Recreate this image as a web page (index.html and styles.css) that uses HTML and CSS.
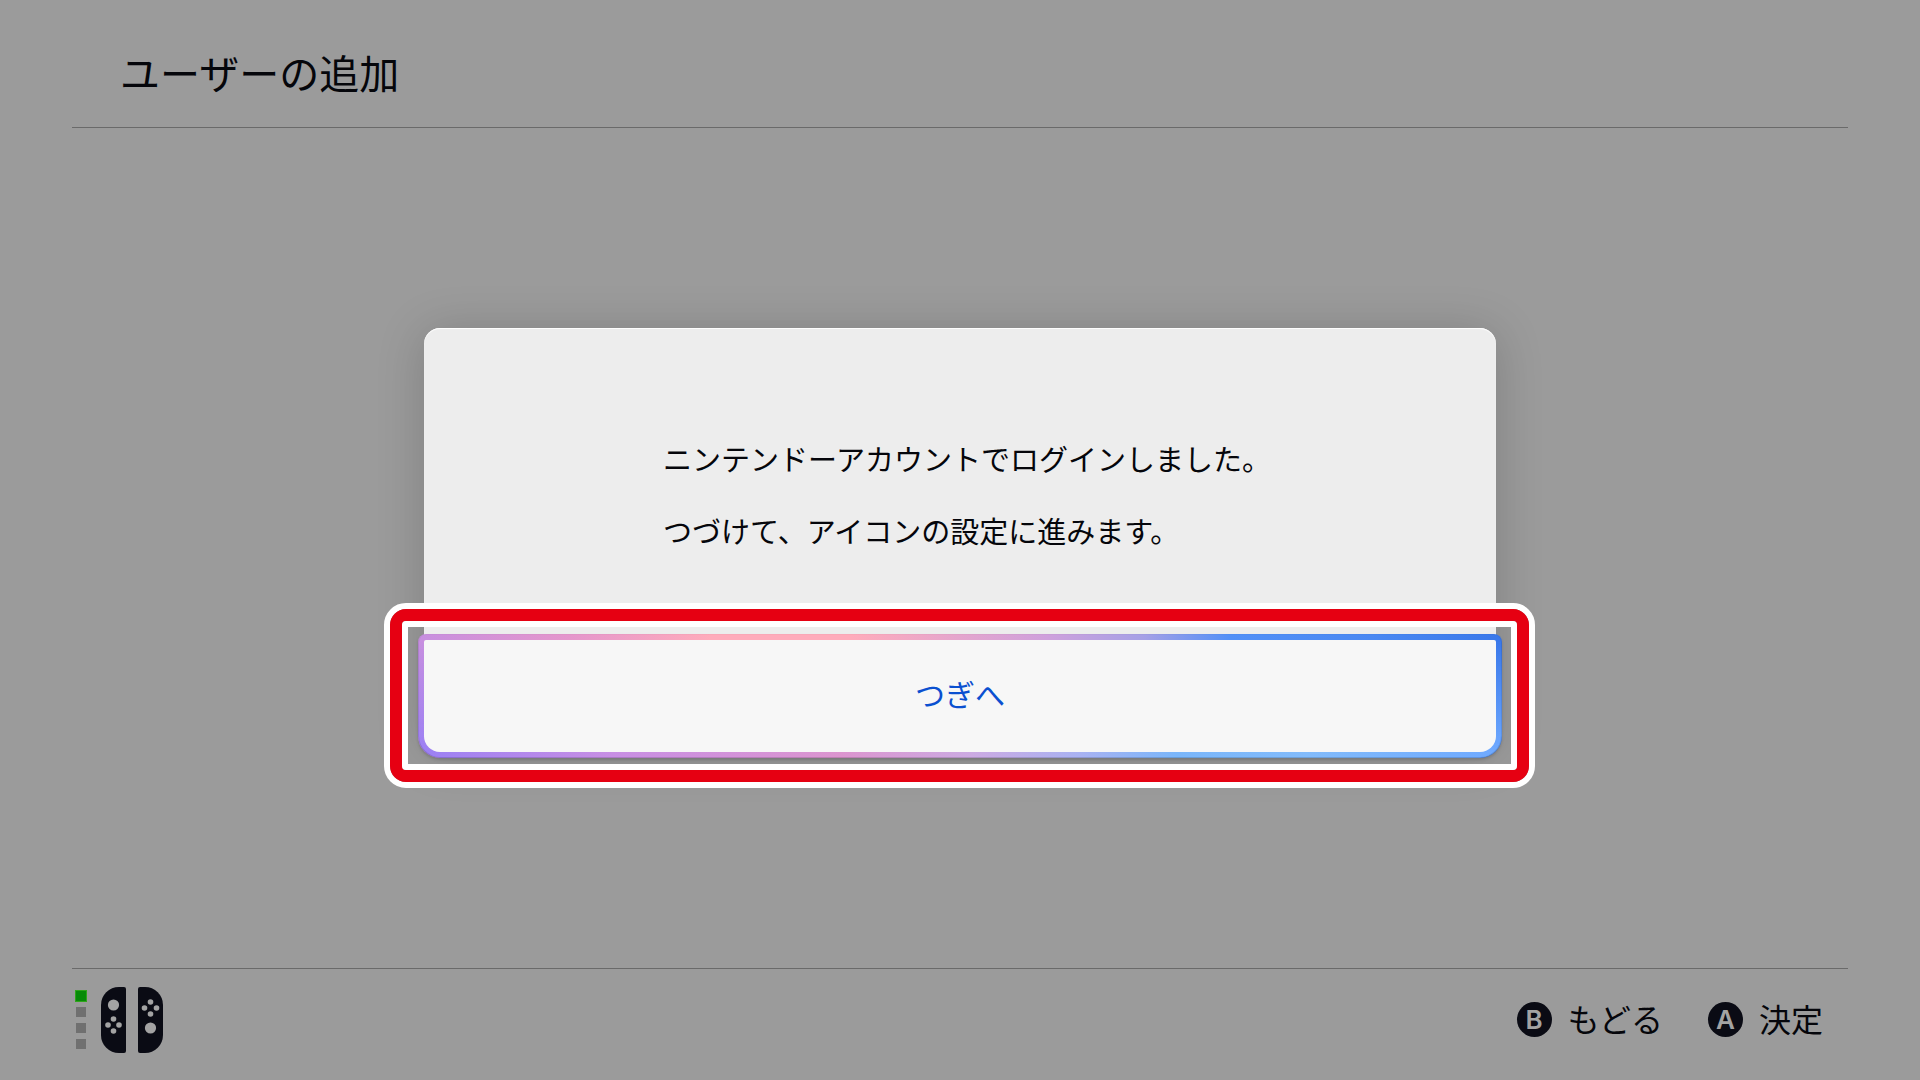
FILE: index.html
```html
<!DOCTYPE html>
<html lang="ja">
<head>
<meta charset="utf-8">
<meta name="viewport" content="width=device-width, initial-scale=1">
<title>ユーザーの追加</title>
<link rel="stylesheet" href="styles.css">
</head>
<body>
<header class="header">
  <h1 class="title">ユーザーの追加</h1>
</header>
<main class="main">
  <section class="dialog" role="dialog" aria-label="ログイン完了">
    <div class="message">
      <p>ニンテンドーアカウントでログインしました。</p>
      <p>つづけて、アイコンの設定に進みます。</p>
    </div>
    <div class="action">
      <button class="next" type="button">つぎへ</button>
      <div class="highlight"></div>
    </div>
  </section>
</main>
<footer class="footer">
  <div class="controller">
    <div class="lamps">
      <span class="lamp lamp-on"></span>
      <span class="lamp"></span>
      <span class="lamp"></span>
      <span class="lamp"></span>
    </div>
    <svg class="joycons" width="62" height="66" viewBox="0 0 62 66" aria-hidden="true">
      <path fill="#0a0b14" d="M18 0H23Q25 0 25 2V64Q25 66 23 66H18A18 18 0 0 1 0 48V18A18 18 0 0 1 18 0Z"/>
      <path fill="#0a0b14" d="M44 0H39Q37 0 37 2V64Q37 66 39 66H44A18 18 0 0 0 62 48V18A18 18 0 0 0 44 0Z"/>
      <g fill="#a3a3a3">
        <circle cx="12.5" cy="18" r="5.6"/>
        <circle cx="12.5" cy="32" r="2.8"/><circle cx="7" cy="38" r="2.8"/><circle cx="18" cy="38" r="2.8"/><circle cx="12.5" cy="44" r="2.8"/>
        <circle cx="49.5" cy="41" r="5.6"/>
        <circle cx="49.5" cy="15" r="2.8"/><circle cx="43.5" cy="21" r="2.8"/><circle cx="55.5" cy="21" r="2.8"/><circle cx="49.5" cy="27" r="2.8"/>
      </g>
    </svg>
  </div>
  <div class="hints">
    <button class="hint" type="button"><span class="key">B</span><span class="label">もどる</span></button>
    <button class="hint" type="button"><span class="key">A</span><span class="label">決定</span></button>
  </div>
</footer>
</body>
</html>
```
FILE: styles.css
```css
* { box-sizing: border-box; }

body {
  margin: 0;
  min-height: 100vh;
  display: flex;
  flex-direction: column;
  background: #9b9b9b;
  color: #05060b;
  font-family: "Noto Sans CJK JP", sans-serif;
  font-weight: 400;
}

button {
  margin: 0;
  padding: 0;
  border: 0;
  background: none;
  color: inherit;
  font: inherit;
  cursor: pointer;
}

.header {
  margin: 0 72px;
  padding: 48px 48px 31px;
  border-bottom: 1px solid #6a6a6a;
}

.title {
  margin: 0;
  font-size: 40px;
  line-height: 48px;
  font-weight: 400;
}

.main {
  flex: 1;
  display: flex;
  align-items: center;
  justify-content: center;
  padding: 0 72px 16px;
}

.dialog {
  width: 100%;
  max-width: 1072px;
  border-radius: 16px;
  background: #ededed;
  box-shadow: 0 4px 48px rgba(0, 0, 0, 0.18), inset 0 1px 1px #fff;
}

.message {
  width: max-content;
  margin: 0 auto;
  padding: 94px 0 68px 14px;
  font-size: 29px;
  line-height: 72px;
}

.message p { margin: 0; }

/* The focus ring is two horizontal gradients, blended from top to bottom. */
.action {
  position: relative;
  margin: 0 -6px -6px;
  border-radius: 8px 8px 22px 22px;
  background: linear-gradient(to right, #c78fe0, #e596cc 14%, #ffabbb 27%, #ffabbb 40%, #cfa0dc 58%, #a5a0e6 67%, #5290f7 75%, #4a88f2 88%, #3a78ea);
}

.action::before {
  content: "";
  position: absolute;
  inset: 0;
  border-radius: 8px 8px 22px 22px;
  background: linear-gradient(to right, #9a80f4, #c88fe4 18%, #dc95cf 39%, #ccaae2 51%, #a9b2f2 61%, #7ab6fa 70%, #82bbfb 82%, #6ea9ff);
  mask-image: linear-gradient(to bottom, transparent 6px, #000 118px);
}

.next {
  position: relative;
  display: block;
  width: 100%;
  height: 124px;
  padding-bottom: 6px;
  border: 6px solid transparent;
  border-radius: 8px 8px 22px 22px;
  background: #f7f7f7 padding-box;
  box-shadow: 0 2px 3px rgba(0, 0, 0, 0.15);
  color: #0b50d0;
  font-size: 30px;
}

.highlight {
  position: absolute;
  inset: -31px -33px -30px -34px;
  border: 6px solid #fff;
  border-radius: 22px;
  pointer-events: none;
}

.highlight::before {
  content: "";
  position: absolute;
  inset: 0;
  border: 12px solid #e60012;
  border-radius: 16px;
}

.highlight::after {
  content: "";
  position: absolute;
  inset: 12px;
  border: 6px solid #fff;
  border-radius: 4px;
}

.footer {
  margin: 0 72px;
  padding: 0 25px 10px 4px;
  height: 112px;
  border-top: 1px solid #6a6a6a;
  display: flex;
  align-items: center;
  justify-content: space-between;
}

.controller {
  display: flex;
  align-items: center;
  gap: 15px;
}

.lamps {
  display: grid;
  gap: 6px;
}

.lamp {
  width: 10px;
  height: 10px;
  background: #707070;
}

.lamp-on {
  background: #078a07;
  outline: 1px solid #2fa51b;
}

.joycons { display: block; }

.hints {
  display: flex;
  gap: 45px;
}

.hint {
  display: flex;
  align-items: center;
  gap: 16px;
  font-size: 32px;
  line-height: 40px;
}

.label { padding-bottom: 4px; }

.key {
  width: 35px;
  height: 35px;
  border-radius: 50%;
  background: #0a0b14;
  color: #a3a3a3;
  font: 600 26px/35px Inter, sans-serif;
  text-align: center;
}
```
